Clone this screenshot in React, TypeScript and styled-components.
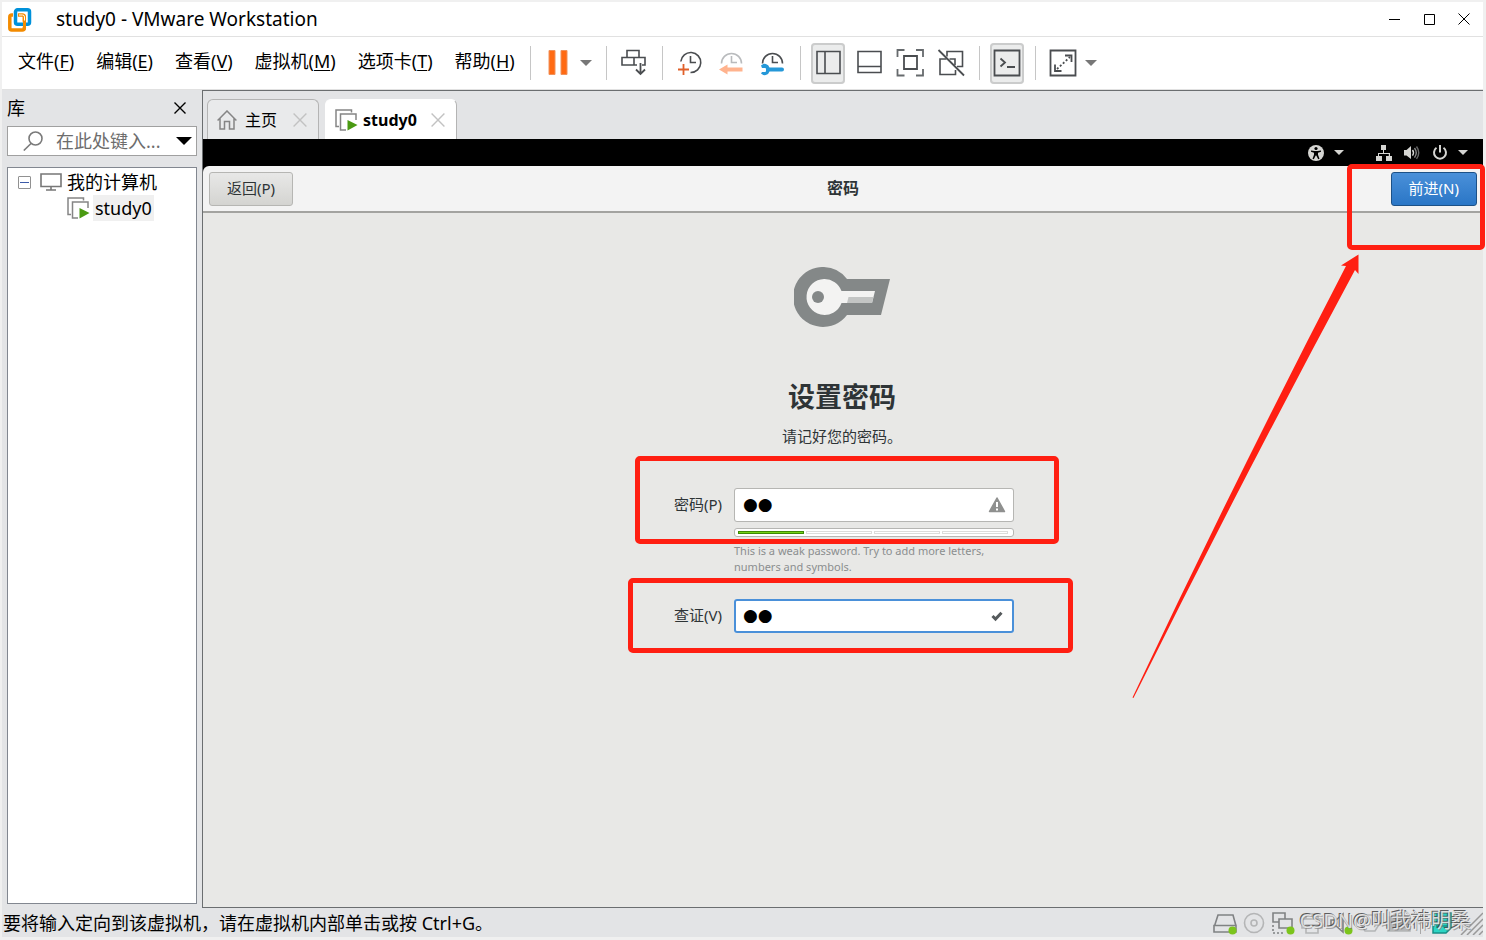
import React, { useState } from "react";
import styled, { createGlobalStyle, css } from "styled-components";

const uiFont = `"Noto Sans", "Noto Sans CJK SC", sans-serif`;
const red = "#ff1f12";

const GlobalStyle = createGlobalStyle`
  *, *::before, *::after { box-sizing: border-box; }
  body { margin: 0; background: #f0f0f0; font-family: ${uiFont}; font-size: 18px; color: #000; }
  button, input { font: inherit; color: inherit; }
  button { margin: 0; padding: 0; border: 0; background: none; }
  svg { display: block; flex: none; }
`;

const Window = styled.div`
  display: flex;
  flex-direction: column;
  min-height: 100vh;
  padding: 2px 3px 3px 2px;
  background: #f0f0f0;
`;

const TitleBar = styled.header`
  display: flex;
  align-items: center;
  height: 35px;
  padding: 0 6px;
  background: #fff;
  border-bottom: 1px solid #e1e1e1;
`;

const WindowTitle = styled.h1`
  flex: 1;
  margin: 0 0 0 22px;
  font-size: 19px;
  font-weight: 400;
  line-height: 24px;
`;

const WindowButtons = styled.div`
  display: flex;
  gap: 1px;
  margin-right: -4px;
`;

const WindowButton = styled.button`
  display: grid;
  place-items: center;
  width: 34px;
  height: 30px;
`;

const MenuBar = styled.div`
  display: flex;
  align-items: center;
  height: 53px;
  padding-left: 16px;
  background: #fff;
  border-bottom: 1px solid #e1e1e1;
`;

const Menus = styled.nav`
  display: flex;
  gap: 22px;
  margin-right: 4px;
  padding-bottom: 4px;
`;

const MenuItem = styled.button`
  line-height: 24px;
  white-space: nowrap;
  u { text-underline-offset: 2px; }
`;

const Separator = styled.i`
  width: 1px;
  height: 34px;
  margin: 0 10px 0 11px;
  background: #c6c6c6;
`;

const ToolGroup = styled.div`
  display: flex;
  gap: 7px;
`;

const Tool = styled.button<{ $on?: boolean }>`
  display: grid;
  place-items: center;
  width: 34px;
  height: 41px;
  border-radius: 4px;
  ${(p) => p.$on && css`background: #ebecec; box-shadow: inset 0 0 0 2px #cbcccc;`}
`;

const DropArrow = styled.button`
  display: grid;
  place-items: center;
  width: 17px;
  height: 41px;
  margin-left: 3px;
`;

const Workspace = styled.div`
  flex: 1;
  display: flex;
  background: #e3e4e6;
`;

const Sidebar = styled.aside`
  display: flex;
  flex-direction: column;
  width: 200px;
  padding: 4px 5px;
`;

const SidebarHead = styled.div`
  display: flex;
  align-items: center;
  justify-content: space-between;
  height: 32px;
  padding: 0 11px 4px 0;
`;

const SidebarTitle = styled.h2`
  margin: 0;
  font-size: 18px;
  font-weight: 400;
  line-height: 24px;
`;

const SearchBox = styled.label`
  display: flex;
  align-items: center;
  height: 30px;
  padding: 0 4px 0 15px;
  background: #fff;
  border: 1px solid #a0a0a0;
`;

const SearchInput = styled.input`
  flex: 1;
  min-width: 0;
  margin-left: 13px;
  padding: 0;
  border: 0;
  outline: 0;
  background: none;
  text-overflow: ellipsis;
  &::placeholder { color: #6d6d6d; opacity: 1; }
`;

const Tree = styled.ul`
  flex: 1;
  margin: 11px 0 0;
  padding: 1px 0 0 10px;
  list-style: none;
  background: #fff;
  border: 1px solid #828790;
`;

const TreeRow = styled.li<{ $child?: boolean }>`
  display: flex;
  align-items: center;
  height: 26px;
  padding-left: ${(p) => (p.$child ? 49 : 0)}px;
`;

const TreeLabel = styled.span<{ $selected?: boolean }>`
  margin-left: 3px;
  padding: 0 2px;
  line-height: 26px;
  white-space: nowrap;
  background: ${(p) => (p.$selected ? "#f0f0f0" : "none")};
`;

const Expander = styled.button`
  display: grid;
  place-items: center;
  width: 13px;
  height: 13px;
  margin-right: 9px;
  border: 1px solid #919191;
  border-radius: 1px;
`;

const Main = styled.main`
  flex: 1;
  display: flex;
  flex-direction: column;
  min-width: 0;
  border: solid #6b6e70;
  border-width: 1px 0 1px 1px;
`;

const Tabs = styled.div`
  display: flex;
  align-items: flex-end;
  gap: 6px;
  height: 48px;
  padding-left: 4px;
`;

const Tab = styled.div<{ $active?: boolean }>`
  display: flex;
  align-items: center;
  height: 40px;
  padding: 0 11px 0 9px;
  border: 1px solid ${(p) => (p.$active ? "#fff" : "#b4b4b4")};
  border-right-color: #b4b4b4;
  border-bottom: 0;
  border-radius: 6px 6px 0 0;
  background: ${(p) => (p.$active ? "#fff" : "#e9eaeb")};
`;

const TabLabel = styled.button<{ $bold?: boolean }>`
  display: flex;
  align-items: center;
  gap: ${(p) => (p.$bold ? 5 : 8)}px;
  margin-right: ${(p) => (p.$bold ? 14 : 16)}px;
  font-size: 16px;
  font-weight: ${(p) => (p.$bold ? 700 : 400)};
  line-height: 24px;
  white-space: nowrap;
`;

const GuestBar = styled.div`
  display: flex;
  align-items: center;
  justify-content: flex-end;
  height: 27px;
  padding-right: 15px;
  background: #000;
`;

const GuestMenu = styled.button`
  display: flex;
  align-items: center;
  gap: 12px;
  & + & { margin-left: 32px; }
  svg:last-child { margin-left: -2px; }
`;

const HeaderBack = styled.div`
  background: #000;
`;

const GuestHeader = styled.div`
  display: grid;
  grid-template-columns: 1fr auto 1fr;
  align-items: center;
  height: 47px;
  padding: 0 6px;
  background: #f3f3f3;
  border-bottom: 2px solid #a3a3a0;
  border-radius: 6px 6px 0 0;
`;

const GuestTitle = styled.h2`
  margin: 0;
  padding-bottom: 2px;
  font-size: 16px;
  line-height: 20px;
  color: #2e3436;
`;

const GuestButton = styled.button<{ $primary?: boolean }>`
  height: 34px;
  padding: 0 17px 2px;
  border: 1px solid ${(p) => (p.$primary ? "#1c5187" : "#b6b6b3")};
  border-radius: 3px;
  font-size: 15px;
  line-height: 20px;
  white-space: nowrap;
  color: ${(p) => (p.$primary ? "#fff" : "#2e3436")};
  background: ${(p) =>
    p.$primary ? "linear-gradient(#4a90d9, #2a76c6)" : "linear-gradient(#e8e8e7, #d4d4d1)"};
`;

const HeaderEnd = styled.div`
  position: relative;
  justify-self: end;
`;

const Setup = styled.section`
  position: relative;
  flex: 1;
  display: flex;
  flex-direction: column;
  align-items: center;
  padding: 54px 2px 0 0;
  color: #2e3436;
  background: #e8e8e6;
`;

const SetupTitle = styled.h3`
  margin: 50px 0 0;
  font-size: 27px;
  line-height: 40px;
`;

const SetupText = styled.p`
  margin: 9px 0 42px;
  font-size: 15px;
  line-height: 20px;
`;

const Form = styled.form`
  display: flex;
  flex-direction: column;
  gap: 24px;
`;

const Field = styled.div`
  position: relative;
  display: grid;
  grid-template-columns: 52px 280px;
  column-gap: 12px;
`;

const FieldLabel = styled.label`
  justify-self: end;
  font-size: 15px;
  line-height: 32px;
  white-space: nowrap;
`;

const Entry = styled.div<{ $focus?: boolean }>`
  display: flex;
  align-items: center;
  height: 34px;
  padding-right: 8px;
  border-radius: 3px;
  background: #fff;
  box-shadow: inset 0 0 0 ${(p) => (p.$focus ? "2px #4a90d9" : "1px #b6b6b3")};
`;

const EntryInput = styled.input`
  flex: 1;
  min-width: 0;
  height: 30px;
  padding: 0 0 2px 9px;
  border: 0;
  outline: 0;
  background: none;
  color: #000;
  font-family: "DejaVu Sans", sans-serif;
  font-size: 17px;
`;

const Strength = styled.div`
  grid-column: 2;
  display: grid;
  grid-template-columns: repeat(4, 1fr);
  gap: 2px;
  height: 9px;
  margin-top: 6px;
  padding: 2px 5px 2px 3px;
  border: 1px solid #b6b6b3;
  border-radius: 3px;
  background: #fff;
`;

const StrengthBlock = styled.i<{ $filled: boolean }>`
  height: 3px;
  border: 1px solid ${(p) => (p.$filled ? "#3f8a06" : "#dcdcda")};
  background: ${(p) => (p.$filled ? "#73d216" : "#fff")};
`;

const Hint = styled.p`
  grid-column: 2;
  margin: 6px 0 0;
  font-size: 11px;
  line-height: 16px;
  color: #8b8e8f;
`;

const Mark = styled.div<{ $top: number; $right: number; $bottom: number; $left: number }>`
  position: absolute;
  top: ${(p) => p.$top}px;
  right: ${(p) => p.$right}px;
  bottom: ${(p) => p.$bottom}px;
  left: ${(p) => p.$left}px;
  z-index: 2;
  border: 5px solid ${red};
  border-radius: 5px;
  pointer-events: none;
`;

const ArrowMark = styled.svg`
  position: absolute;
  top: 41px;
  right: 122px;
  pointer-events: none;
`;

const StatusBar = styled.footer`
  position: relative;
  display: flex;
  align-items: center;
  justify-content: space-between;
  height: 29px;
  padding-left: 1px;
  background: #e3e4e6;
`;

const StatusText = styled.span`
  line-height: 24px;
  white-space: nowrap;
`;

const Devices = styled.div`
  display: flex;
  align-items: center;
  gap: 5px;
`;

const DeviceSeparator = styled.i`
  width: 1px;
  height: 22px;
  margin: 0 4px;
  background: #a8a8a8;
`;

const Watermark = styled.span`
  position: absolute;
  right: 12px;
  top: 0;
  font-size: 20px;
  line-height: 26px;
  white-space: nowrap;
  color: rgba(240, 240, 240, 0.85);
  text-shadow: -1px -1px 0 rgba(70, 70, 70, 0.85), 1px 1px 0 rgba(120, 120, 120, 0.6);
`;

const Logo = () => (
  <svg width="26" height="26" viewBox="0 0 26 26" fill="none">
    <rect x="1.800" y="9" width="14.500" height="15" rx="2" stroke="#f38b00" strokeWidth="3.500" />
    <rect x="7.500" y="3.800" width="14" height="14.500" rx="2" stroke="#fff" strokeWidth="5" />
    <rect x="7.500" y="3.800" width="14" height="14.500" rx="2" stroke="#0091da" strokeWidth="3.500" />
    <path d="M11 9h3.500a2 2 0 0 1 2 2v5" stroke="#fff" strokeWidth="1" />
    <path d="M16.500 14.500v9" stroke="#f38b00" strokeWidth="3" />
  </svg>
);

const Triangle = ({ w = 12, h = 6, color = "#777" }) => (
  <svg width={w} height={h} viewBox="0 0 12 6" preserveAspectRatio="none">
    <path d="M0 0h12L6 6z" fill={color} />
  </svg>
);

const Cross = ({ size = 12, color = "#000", width = 1.2 }) => (
  <svg width={size} height={size} viewBox="0 0 12 12">
    <path d="M.5.5l11 11M11.500.5l-11 11" stroke={color} strokeWidth={width} />
  </svg>
);

const Icon = ({ children, size = 28 }: { children: React.ReactNode; size?: number }) => (
  <svg width={size} height={size} viewBox={`0 0 ${size} ${size}`} fill="none" stroke="#4a4d50" strokeWidth="1.800">
    {children}
  </svg>
);

const PauseIcon = () => (
  <Icon>
    <path d="M5 1.500h6v24H5zM17 1.500h6v24h-6z" fill="#ff6a13" stroke="#f0925c" strokeWidth="1" />
  </Icon>
);

const SendKeysIcon = () => (
  <Icon>
    <path d="M7 8V1.500h12V8M17 16H2V8.500h23V16h-3M14 8.500V16" strokeWidth="1.600" />
    <path d="M20.500 14v10.500M16 20.500l4.500 4.500 4.500-4.500" />
  </Icon>
);

const ClockFace = ({ color = "#4a4d50", full = false }) => (
  <g stroke={color} strokeWidth="1.600">
    <path d={full ? "M4.800 12.500A10 10 0 1 1 14.500 23.500" : "M4.500 14.500A10 10 0 1 1 24.500 14.500"} />
    <path d="M14.500 7v6.500H20" />
  </g>
);

const SnapshotIcon = () => (
  <Icon>
    <ClockFace full />
    <path d="M7.500 15v11M2 20.500h11" stroke="#e0602a" />
  </Icon>
);

const RevertIcon = () => (
  <Icon>
    <ClockFace color="#b9bbbd" />
    <path d="M2 20.500l8.500-5v3h15v4h-15v3z" fill="#ffb38e" stroke="none" />
  </Icon>
);

const ManageIcon = () => (
  <Icon>
    <ClockFace />
    <path
      d="M3 16.500a5 5 0 0 1 8.500 2H24a2 2 0 0 1 0 4H11.500a5 5 0 0 1-8.500 2l1-1.500h3a1 1 0 0 0 1-1v-2a1 1 0 0 0-1-1H4z"
      fill="#2598d8"
      stroke="none"
    />
  </Icon>
);

const SidePanelIcon = () => (
  <Icon><path d="M3 2.500h23v22H3zM11 2.500v22" strokeWidth="1.600" /></Icon>
);

const BottomPanelIcon = () => (
  <Icon><path d="M3 2.500h23v21H3zM3 17.500h23" strokeWidth="1.600" /></Icon>
);

const FullScreenIcon = () => (
  <Icon>
    <path d="M8 7h13v13H8z" />
    <path d="M1.500 8V1h7M20 1h7v7M27 20v6.500h-7M8.500 26.500h-7V20" stroke="#666a6d" />
  </Icon>
);

const UnityIcon = () => (
  <Icon>
    <path d="M10 7.500V2.500h15.500v15H20M9.500 10H3v15.500h15.500V21M12.500 10H18v6" strokeWidth="1.600" />
    <path d="M1.500 1L27 26.500" strokeWidth="1.800" />
  </Icon>
);

const TerminalIcon = () => (
  <Icon>
    <path d="M1.500 1.500h25v25h-25zM7.500 9.500l4.500 4-4.500 4M14 18h8" />
  </Icon>
);

const StretchIcon = () => (
  <Icon>
    <path d="M1.500 1.500h25v25h-25z" />
    <path d="M16 6.500h6.500V13M6 15.500V22h6.500" />
    <path d="M8 20L21 8" strokeDasharray="2 2" />
  </Icon>
);

const SearchIcon = () => (
  <svg width="20" height="20" viewBox="0 0 20 20" fill="none" stroke="#7a7a7a" strokeWidth="1.600">
    <circle cx="12.500" cy="7.500" r="6.500" />
    <path d="M8 12.500L.8 19.500" />
  </svg>
);

const MonitorIcon = () => (
  <svg width="22" height="18" viewBox="0 0 22 18" fill="none" stroke="#777" strokeWidth="1.600">
    <path d="M1 1h20v12.500H1zM11 13.500V17M6 17h10" />
  </svg>
);

const MachineIcon = () => (
  <svg width="23" height="22" viewBox="0 0 23 22" fill="none" stroke="#858585" strokeWidth="1.500">
    <path d="M4 17.500H1V1h15.500v2.500M11 21H5.500V5H21v6" />
    <path d="M12.500 11v10.500L22.500 16z" fill="#4a9a12" stroke="none" />
  </svg>
);

const HomeIcon = () => (
  <svg width="20" height="20" viewBox="0 0 20 20" fill="none" stroke="#858585" strokeWidth="1.500">
    <path d="M.6 10.500L10 1l9.400 9.500M3 8.500V19h4.500v-7.500h5V19H17V8.500" />
  </svg>
);

const AccessIcon = () => (
  <svg width="16" height="16" viewBox="0 0 16 16">
    <circle cx="8" cy="8" r="8" fill="#d5d5d2" />
    <circle cx="8" cy="3.500" r="1.600" />
    <path d="M3 5.500l3.500.6h3L13 5.500v1.300l-3 .9v2l1.500 4-1.300.5L8.300 10.500h-.6L5.800 14.200l-1.300-.5L6 9.700v-2l-3-.9z" />
  </svg>
);

const NetworkIcon = () => (
  <svg width="16" height="16" viewBox="0 0 16 16" fill="#d5d5d2">
    <path d="M5 0h5v5H5zM0 11h6v5H0zM10 11h6v5h-6zM7 5h1v3h6v3h-1.200V9H3v2H2V8h5z" />
  </svg>
);

const VolumeIcon = () => (
  <svg width="16" height="16" viewBox="0 0 16 16" fill="none" strokeWidth="1.400">
    <path d="M0 5h2.500L7 1v13L2.500 10.500H0z" fill="#d5d5d2" />
    <path d="M8.500 5q2 2.800 0 5.600" stroke="#d5d5d2" />
    <path d="M10.500 3q3.500 4.800 0 9.600" stroke="#888" />
    <path d="M12.500 1.500q4.500 6.200 0 12.400" stroke="#666" />
  </svg>
);

const PowerIcon = () => (
  <svg width="16" height="16" viewBox="0 0 16 16" fill="none" stroke="#d5d5d2" strokeWidth="2">
    <path d="M4.500 2.800a6 6 0 1 0 7 0M8 0v7.500" />
  </svg>
);

const KeyIcon = () => (
  <svg width="96" height="60" viewBox="0 0 96 60">
    <path d="M30 0a30 30 0 0 1 23 12h43l-9 36H53A30 30 0 1 1 30 0z" fill="#848888" />
    <path d="M30 12a18 18 0 0 1 17.500 12H81l-3 12H47.500A18 18 0 1 1 30 12z" fill="#f3f3f2" />
    <path d="M54.500 30h25L78 36H53z" fill="#c3c5c4" />
    <circle cx="24" cy="30" r="6" fill="#848888" />
  </svg>
);

const WarningIcon = () => (
  <svg width="18" height="16" viewBox="0 0 18 16">
    <path d="M9 1l7.500 13.500h-15z" fill="#8f908f" stroke="#8f908f" strokeWidth="1.500" strokeLinejoin="round" />
    <path d="M8 5h2v5H8zM8 11.500h2v2H8z" fill="#fff" />
  </svg>
);

const TickIcon = () => (
  <svg width="18" height="12" viewBox="0 0 18 12">
    <path d="M4.500 6l3 3 6-6.200" fill="none" stroke="#555a5c" strokeWidth="3" />
  </svg>
);

const Device = ({ children, on }: { children: React.ReactNode; on?: boolean }) => (
  <svg width="24" height="24" viewBox="0 0 24 24" fill="none" stroke={on ? "#808284" : "#b4b5b6"} strokeWidth="1.600">
    {children}
    {on && <circle cx="19.500" cy="19.500" r="4" fill="#7cc41c" stroke="none" />}
  </svg>
);

const menus = [
  ["文件", "F"],
  ["编辑", "E"],
  ["查看", "V"],
  ["虚拟机", "M"],
  ["选项卡", "T"],
  ["帮助", "H"],
];

export default function App() {
  const [password, setPassword] = useState("●●");
  const [confirm, setConfirm] = useState("●●");

  return (
    <>
      <GlobalStyle />
      <Window>
        <TitleBar>
          <Logo />
          <WindowTitle>study0 - VMware Workstation</WindowTitle>
          <WindowButtons>
            <WindowButton aria-label="最小化">
              <svg width="11" height="11"><path d="M0 5.500h11" stroke="#000" /></svg>
            </WindowButton>
            <WindowButton aria-label="最大化">
              <svg width="11" height="11"><path d="M.5.5h10v10H.5z" stroke="#000" fill="none" /></svg>
            </WindowButton>
            <WindowButton aria-label="关闭"><Cross width={1} /></WindowButton>
          </WindowButtons>
        </TitleBar>

        <MenuBar>
          <Menus>
            {menus.map(([name, key]) => (
              <MenuItem key={key}>{name}(<u>{key}</u>)</MenuItem>
            ))}
          </Menus>
          <Separator />
          <Tool aria-label="挂起"><PauseIcon /></Tool>
          <DropArrow aria-label="电源选项"><Triangle /></DropArrow>
          <Separator />
          <Tool aria-label="发送按键"><SendKeysIcon /></Tool>
          <Separator />
          <ToolGroup>
            <Tool aria-label="拍摄快照"><SnapshotIcon /></Tool>
            <Tool aria-label="恢复快照"><RevertIcon /></Tool>
            <Tool aria-label="管理快照"><ManageIcon /></Tool>
          </ToolGroup>
          <Separator />
          <ToolGroup>
            <Tool $on aria-label="显示库"><SidePanelIcon /></Tool>
            <Tool aria-label="显示缩略图"><BottomPanelIcon /></Tool>
            <Tool aria-label="全屏"><FullScreenIcon /></Tool>
            <Tool aria-label="Unity"><UnityIcon /></Tool>
          </ToolGroup>
          <Separator />
          <Tool $on aria-label="控制台"><TerminalIcon /></Tool>
          <Separator />
          <Tool aria-label="拉伸"><StretchIcon /></Tool>
          <DropArrow aria-label="拉伸选项"><Triangle /></DropArrow>
        </MenuBar>

        <Workspace>
          <Sidebar>
            <SidebarHead>
              <SidebarTitle>库</SidebarTitle>
              <button aria-label="关闭库"><Cross width={1.4} /></button>
            </SidebarHead>
            <SearchBox>
              <SearchIcon />
              <SearchInput aria-label="搜索" placeholder="在此处键入..." />
              <Triangle w={16} h={8} color="#000" />
            </SearchBox>
            <Tree>
              <TreeRow>
                <Expander aria-label="折叠">
                  <svg width="9" height="1"><path d="M0 .5h9" stroke="#3c5aa8" /></svg>
                </Expander>
                <MonitorIcon />
                <TreeLabel>我的计算机</TreeLabel>
              </TreeRow>
              <TreeRow $child>
                <MachineIcon />
                <TreeLabel $selected>study0</TreeLabel>
              </TreeRow>
            </Tree>
          </Sidebar>

          <Main>
            <Tabs>
              <Tab>
                <TabLabel><HomeIcon />主页</TabLabel>
                <button aria-label="关闭主页"><Cross size={14} color="#c2c2c2" /></button>
              </Tab>
              <Tab $active>
                <TabLabel $bold><MachineIcon />study0</TabLabel>
                <button aria-label="关闭 study0"><Cross size={14} color="#c2c2c2" /></button>
              </Tab>
            </Tabs>

            <GuestBar>
              <GuestMenu aria-label="辅助功能">
                <AccessIcon />
                <Triangle w={10} h={5} color="#d5d5d2" />
              </GuestMenu>
              <GuestMenu aria-label="系统">
                <NetworkIcon />
                <VolumeIcon />
                <PowerIcon />
                <Triangle w={10} h={5} color="#d5d5d2" />
              </GuestMenu>
            </GuestBar>
            <HeaderBack>
              <GuestHeader>
                <div><GuestButton>返回(P)</GuestButton></div>
                <GuestTitle>密码</GuestTitle>
                <HeaderEnd>
                  <GuestButton $primary>前进(N)</GuestButton>
                  <Mark $top={-8} $right={-8} $bottom={-44} $left={-44} />
                </HeaderEnd>
              </GuestHeader>
            </HeaderBack>

            <Setup>
              <KeyIcon />
              <SetupTitle>设置密码</SetupTitle>
              <SetupText>请记好您的密码。</SetupText>
              <Form>
                <Field>
                  <FieldLabel htmlFor="password">密码(P)</FieldLabel>
                  <Entry>
                    <EntryInput id="password" value={password} onChange={(e) => setPassword(e.target.value)} />
                    <WarningIcon />
                  </Entry>
                  <Strength>
                    {[0, 1, 2, 3].map((i) => <StrengthBlock key={i} $filled={i < 1} />)}
                  </Strength>
                  <Hint>This is a weak password. Try to add more letters, numbers and symbols.</Hint>
                  <Mark $top={-32} $right={-45} $bottom={31} $left={-35} />
                </Field>
                <Field>
                  <FieldLabel htmlFor="confirm">查证(V)</FieldLabel>
                  <Entry $focus>
                    <EntryInput id="confirm" value={confirm} onChange={(e) => setConfirm(e.target.value)} />
                    <TickIcon />
                  </Entry>
                  <Mark $top={-21} $right={-59} $bottom={-20} $left={-42} />
                </Field>
              </Form>
              <ArrowMark width="230" height="446" viewBox="0 0 230 446">
                <path d="M1.500 443.500Q103 228 215 12l-5-.5L227.500.5V20L224 16Q109 230 2.500 444z" fill={red} />
              </ArrowMark>
            </Setup>
          </Main>
        </Workspace>

        <StatusBar>
          <StatusText>要将输入定向到该虚拟机，请在虚拟机内部单击或按 Ctrl+G。</StatusText>
          <Devices>
            <Device on><path d="M1.500 15L5 4h15l3 11M1 14.500h22V21H1z" /></Device>
            <Device><circle cx="12" cy="12" r="9.500" /><circle cx="12" cy="12" r="3" /></Device>
            <Device on>
              <path d="M8 11H2V2h12v6M8 8h13v9H8z" />
              <path d="M2 14v8h12" strokeDasharray="2 2" />
            </Device>
            <Device><path d="M6 8V3h12v5M6 17H2V8h20v9h-4M6 14h12v8H6z" /></Device>
            <Device on><path d="M2 9h5l7-6v18l-7-6H2z" /></Device>
            <Device><path d="M7 4h10l5 8-5 8H7l-5-8z" /></Device>
            <Device><path d="M1 6h22v14H1z" fill="#b4b5b6" /></Device>
            <DeviceSeparator />
            <svg width="24" height="24" viewBox="0 0 24 24">
              <path d="M3 2h18v15l-5 5H3z" fill="#2cd5c4" stroke="#178e86" strokeWidth="1.500" />
              <path d="M6 7h12M6 11h12M6 15h12" stroke="#178e86" strokeWidth="1.500" />
            </svg>
            <svg width="24" height="24" viewBox="0 0 24 24" stroke="#999" strokeWidth="1.500">
              <path d="M2 24L24 2M8 24L24 8M14 24l10-10M20 24l4-4" />
            </svg>
          </Devices>
          <Watermark>CSDN@叫我祎明桑</Watermark>
        </StatusBar>
      </Window>
    </>
  );
}
